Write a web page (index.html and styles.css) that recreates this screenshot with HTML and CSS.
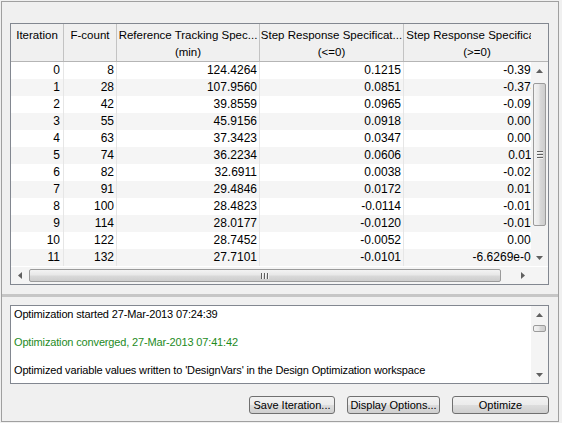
FILE: index.html
```html
<!DOCTYPE html>
<html>
<head>
<meta charset="utf-8">
<link rel="stylesheet" href="styles.css">
</head>
<body>
<div class="frame">
  <div class="upper">
    <div class="table">
      <div class="thead">
        <div class="hview">
          <div class="hcell c1">Iteration</div>
          <div class="hcell">F-count</div>
          <div class="hcell">Reference Tracking Spec...<br>(min)</div>
          <div class="hcell">Step Response Specificat...<br>(&lt;=0)</div>
          <div class="hcell">Step Response Specificat...<br>(&gt;=0)</div>
        </div>
        <div class="hcorner"></div>
      </div>
      <div class="tbody">
        <div class="rows">
          <div class="row"><span>0</span><span>8</span><span>124.4264</span><span>0.1215</span><span>-0.3912</span></div>
          <div class="row"><span>1</span><span>28</span><span>107.9560</span><span>0.0851</span><span>-0.3745</span></div>
          <div class="row"><span>2</span><span>42</span><span>39.8559</span><span>0.0965</span><span>-0.0938</span></div>
          <div class="row"><span>3</span><span>55</span><span>45.9156</span><span>0.0918</span><span>0.0021</span></div>
          <div class="row"><span>4</span><span>63</span><span>37.3423</span><span>0.0347</span><span>0.0046</span></div>
          <div class="row"><span>5</span><span>74</span><span>36.2234</span><span>0.0606</span><span>0.0113</span></div>
          <div class="row"><span>6</span><span>82</span><span>32.6911</span><span>0.0038</span><span>-0.0247</span></div>
          <div class="row"><span>7</span><span>91</span><span>29.4846</span><span>0.0172</span><span>0.0158</span></div>
          <div class="row"><span>8</span><span>100</span><span>28.4823</span><span>-0.0114</span><span>-0.0136</span></div>
          <div class="row"><span>9</span><span>114</span><span>28.0177</span><span>-0.0120</span><span>-0.0109</span></div>
          <div class="row"><span>10</span><span>122</span><span>28.7452</span><span>-0.0052</span><span>0.0042</span></div>
          <div class="row"><span>11</span><span>132</span><span>27.7101</span><span>-0.0101</span><span>-6.6269e-004</span></div>
        </div>
        <div class="vscroll">
          <div class="arrow"><svg width="7" height="4" viewBox="0 0 7 4"><path d="M0 4L3.5 0L7 4Z"/></svg></div>
          <div class="vtrack">
            <div class="vthumb big"><div class="vgrip"><i></i><i></i><i></i></div></div>
          </div>
          <div class="arrow"><svg width="7" height="4" viewBox="0 0 7 4"><path d="M0 0L3.5 4L7 0Z"/></svg></div>
        </div>
      </div>
      <div class="hrow">
        <div class="hscroll">
          <div class="arrow"><svg width="4" height="7" viewBox="0 0 4 7"><path d="M4 0L0 3.5L4 7Z"/></svg></div>
          <div class="htrack">
            <div class="hthumb"><div class="hgrip"><i></i><i></i><i></i></div></div>
          </div>
          <div class="arrow"><svg width="4" height="7" viewBox="0 0 4 7"><path d="M0 0L4 3.5L0 7Z"/></svg></div>
        </div>
        <div class="corner"></div>
      </div>
    </div>
  </div>
  <div class="splitter"></div>
  <div class="lower">
    <div class="log">
      <div class="log-text">
        <p>Optimization started 27-Mar-2013 07:24:39</p>
        <p class="ok">Optimization converged, 27-Mar-2013 07:41:42</p>
        <p>Optimized variable values written to 'DesignVars' in the Design Optimization workspace</p>
        <p>Initial design has been updated with optimized values</p>
      </div>
      <div class="vscroll small">
        <div class="arrow"><svg width="7" height="4" viewBox="0 0 7 4"><path d="M0 4L3.5 0L7 4Z"/></svg></div>
        <div class="vtrack">
          <div class="vthumb tiny"></div>
        </div>
        <div class="arrow"><svg width="7" height="4" viewBox="0 0 7 4"><path d="M0 0L3.5 4L7 0Z"/></svg></div>
      </div>
    </div>
    <div class="buttons">
      <button class="btn w1">Save Iteration...</button>
      <button class="btn w2">Display Options...</button>
      <button class="btn w3">Optimize</button>
    </div>
  </div>
</div>
</body>
</html>
```
FILE: styles.css
```css
body {
  margin: 0;
  width: 562px;
  height: 423px;
  overflow: hidden;
  background: #f0f0f0;
  font-family: "Liberation Sans", Arial, sans-serif;
  color: #000;
}

.frame {
  margin: 1px 0 0 1px;
  width: 558px;
  height: 421px;
  box-sizing: border-box;
  border: 1px solid #a0a0a0;
  display: flex;
  flex-direction: column;
}

.upper {
  padding: 21px 9px 9px 8px;
}

.table {
  height: 262px;
  box-sizing: border-box;
  border: 1px solid #828790;
  background: #fff;
  display: flex;
  flex-direction: column;
}

.thead {
  display: flex;
  height: 38px;
  box-sizing: border-box;
  border-bottom: 1px solid #b5b5b5;
  background: #f0f0f0;
}

.hview,
.row {
  display: grid;
  grid-template-columns: 53px 53px 143px 144px 147px;
}

.hview {
  width: 520px;
  overflow: hidden;
}

.hcell {
  box-sizing: border-box;
  border-right: 1px solid #c3c3c3;
  text-align: center;
  font-size: 11.5px;
  line-height: 17px;
  padding-top: 3px;
  white-space: nowrap;
  overflow: hidden;
}

.hcorner {
  width: 17px;
}

.tbody {
  display: flex;
  height: 205px;
}

.rows {
  width: 520px;
  overflow: hidden;
}

.row {
  height: 17px;
  font-size: 12px;
  line-height: 17px;
}

.row:nth-child(even) {
  background: #f5f5f5;
}

.row span {
  box-sizing: border-box;
  text-align: right;
  border-right: 1px solid #e6e6e6;
  padding-right: 2px;
  white-space: nowrap;
}

.row span:first-child {
  padding-right: 3px;
}

.row span:last-child {
  padding-right: 6px;
}

/* scrollbars */
.vscroll {
  width: 17px;
  display: flex;
  flex-direction: column;
  background: #f4f4f4;
}

.arrow {
  width: 17px;
  height: 17px;
  flex: none;
  display: flex;
  align-items: center;
  justify-content: center;
}

.arrow svg {
  fill: #606060;
  display: block;
}

.vtrack {
  flex: 1;
  padding: 4px 0 0 2px;
}

.small .vtrack {
  padding-top: 2px;
}

.vthumb {
  width: 13px;
  box-sizing: border-box;
  border: 1px solid #9b9b9b;
  border-radius: 2px;
  background: linear-gradient(to right, #f3f3f3 0%, #e8e8e8 45%, #d9d9d9 55%, #cdcdcd 100%);
  display: flex;
  align-items: center;
  justify-content: center;
}

.vthumb.big {
  height: 143px;
}

.vthumb.tiny {
  height: 7px;
}

.vgrip {
  display: flex;
  flex-direction: column;
  gap: 1px;
}

.vgrip i {
  display: block;
  width: 6px;
  height: 1px;
  background: #5f5f5f;
  border-bottom: 1px solid #f4f4f4;
}

.hrow {
  display: flex;
  height: 17px;
  margin-top: 1px;
}

.hscroll {
  width: 520px;
  display: flex;
  background: #f4f4f4;
}

.htrack {
  flex: 1;
  padding: 2px 0 0 1px;
}

.hthumb {
  width: 472px;
  height: 13px;
  box-sizing: border-box;
  border: 1px solid #9b9b9b;
  border-radius: 2px;
  background: linear-gradient(to bottom, #f3f3f3 0%, #e8e8e8 45%, #d9d9d9 55%, #cdcdcd 100%);
  display: flex;
  align-items: center;
  justify-content: center;
}

.hgrip {
  display: flex;
  gap: 1px;
}

.hgrip i {
  display: block;
  width: 1px;
  height: 6px;
  background: #5f5f5f;
  border-right: 1px solid #f4f4f4;
}

.corner {
  width: 17px;
  background: #f4f4f4;
}

.splitter {
  height: 3px;
  background: #c6c6c6;
}

.lower {
  padding: 8px 9px 7px 8px;
}

.log {
  height: 79px;
  box-sizing: border-box;
  border: 1px solid #828790;
  background: #fff;
  display: flex;
}

.log-text {
  flex: 1;
  overflow: hidden;
  padding: 1px 0 0 3px;
  font-size: 11px;
  letter-spacing: -0.15px;
  line-height: 14px;
}

.log-text p {
  margin: 0 0 14px;
  white-space: nowrap;
}

.log-text .ok {
  color: #1e8b1e;
}

.buttons {
  display: flex;
  justify-content: flex-end;
  gap: 12px;
  margin-top: 12px;
}

.btn {
  height: 18px;
  box-sizing: border-box;
  border: 1px solid #707070;
  border-radius: 3px;
  background: linear-gradient(to bottom, #f2f2f2 0%, #ebebeb 50%, #dddddd 51%, #cfcfcf 100%);
  font-family: "Liberation Sans", Arial, sans-serif;
  font-size: 11px;
  color: #000;
  padding: 0;
  line-height: 16px;
}

.w1 { width: 86px; }
.w2 { width: 93px; }
.w3 { width: 97px; }
```
